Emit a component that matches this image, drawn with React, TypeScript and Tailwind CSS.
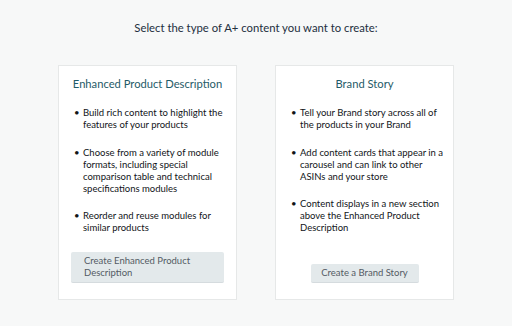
import React from 'react';

interface ContentType {
    title: string;
    bullets: string[][];
    button: string[];
    wide: boolean;
}

// line breaks follow the screenshot
const types: ContentType[] = [
    {
        title: 'Enhanced Product Description',
        bullets: [
            ['Build rich content to highlight the', 'features of your products'],
            ['Choose from a variety of module', 'formats, including special', 'comparison table and technical', 'specifications modules'],
            ['Reorder and reuse modules for', 'similar products'],
        ],
        button: ['Create Enhanced Product', 'Description'],
        wide: true,
    },
    {
        title: 'Brand Story',
        bullets: [
            ['Tell your Brand story across all of', 'the products in your Brand'],
            ['Add content cards that appear in a', 'carousel and can link to other', 'ASINs and your store'],
            ['Content displays in a new section', 'above the Enhanced Product', 'Description'],
        ],
        button: ['Create a Brand Story'],
        wide: false,
    },
];

const App: React.FC = () => {
    return (
        <div
            className="w-[512px] h-[326px] bg-[#f7f8f8] flex flex-col items-center"
            style={{ fontFamily: 'Lato, "Noto Sans", sans-serif' }}
        >
            <h1 className="mt-[19px] text-[11.3px] leading-[18px] text-[#232f3e]">
                Select the type of A+ content you want to create:
            </h1>
            <div className="mt-[28px] flex gap-[38px]">
                {types.map((type) => (
                    <div
                        key={type.title}
                        className="w-[179px] h-[235px] bg-white border border-[#e6e8e8] flex flex-col px-[12px] pt-[10px] pb-[16px]"
                    >
                        <h2 className="text-center text-[11.2px] leading-[16px] text-[#1f5b68] whitespace-nowrap">
                            {type.title}
                        </h2>
                        <ul className="mt-[15px] flex flex-col gap-[15.5px] pl-[3px]">
                            {type.bullets.map((b) => (
                                <li key={b[0]} className="flex text-[9.5px] leading-[12px] text-[#111418]">
                                    <span className="w-[9px] shrink-0">•</span>
                                    <span className="whitespace-nowrap">
                                        {b.map((line) => (
                                            <div key={line}>{line}</div>
                                        ))}
                                    </span>
                                </li>
                            ))}
                        </ul>
                        <div className="mt-auto flex justify-center">
                            <button
                                className={`bg-[#e3e9eb] border-b border-[#d5dbde] rounded-[2px] text-[9.5px] leading-[12px] text-[#545b64] whitespace-nowrap ${
                                    type.wide ? 'w-full text-left px-[13px] py-[3px]' : 'w-[108px] text-center py-[3px]'
                                }`}
                            >
                                {type.button.map((line) => (
                                    <div key={line}>{line}</div>
                                ))}
                            </button>
                        </div>
                    </div>
                ))}
            </div>
        </div>
    );
};

export default App;
